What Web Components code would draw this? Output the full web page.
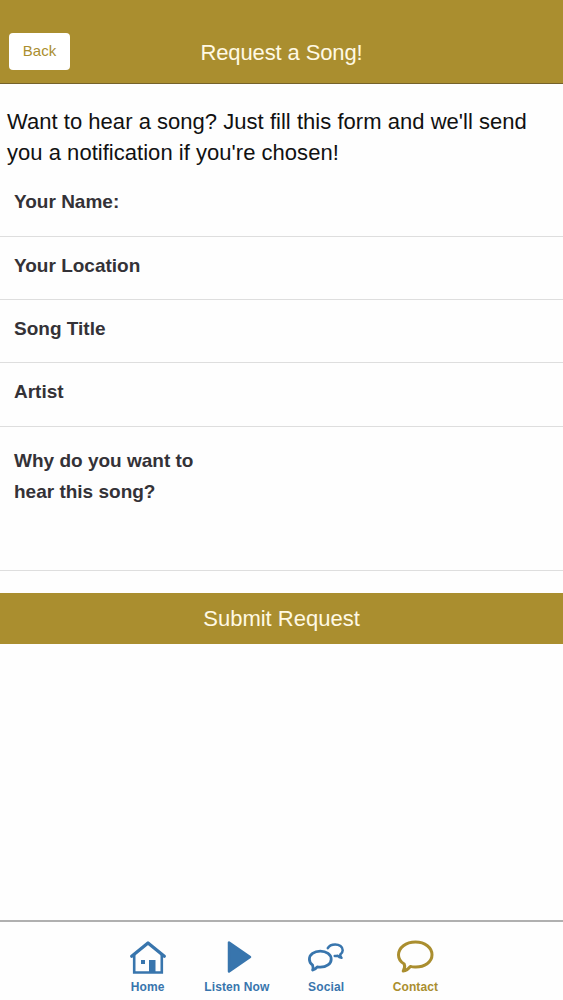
<!DOCTYPE html>
<html lang="en">
<head>
<meta charset="utf-8">
<title>Request a Song!</title>
<style>
html, body { margin: 0; height: 100%; background: #fefefe; }
body { font-family: "Liberation Sans", Arial, sans-serif; overflow: hidden; --gold: #aa8e2f; --blue: #3875ad; }
</style>
</head>
<body>
<song-request-page></song-request-page>
<script>
function define(name, html) {
  customElements.define(name, class extends HTMLElement {
    constructor() {
      super();
      this.attachShadow({ mode: "open" }).innerHTML = html;
    }
  });
}

define("nav-header", `
<style>
:host { display: grid; grid-template-columns: 100px 1fr 100px; box-sizing: border-box; height: 84px; padding-top: 20px; align-items: center; background: var(--gold); border-bottom: 1px solid #75622a; color: #fff9e4; }
button { justify-self: start; margin: 0 0 0 9px; padding: 0 0 2px; width: 61px; height: 37px; border: 0; border-radius: 4px; background: #fff; color: var(--gold); font: 15px "Liberation Sans", Arial, sans-serif; }
h1 { margin: 3px 0 0; font-size: 22px; font-weight: 400; line-height: 30px; text-align: center; white-space: nowrap; letter-spacing: -.12px; }
</style>
<button>Back</button><h1><slot></slot></h1>`);

define("intro-text", `
<style>
:host { display: block; box-sizing: border-box; height: 89.6px; padding: 22px 0 0 7px; font-size: 22px; line-height: 31px; letter-spacing: .03px; color: #111; white-space: nowrap; }
</style><slot></slot>`);

define("form-row", `
<style>
:host { display: flex; align-items: center; box-sizing: border-box; height: 63.3px; padding: 0 14px 5.6px; border-bottom: 1px solid #dedede; font-size: 19px; font-weight: 700; line-height: 31px; color: #343237; }
:host([tall]) { height: 144px; align-items: flex-start; padding-top: 18px; }
label { max-width: 200px; }
</style><label><slot></slot></label>`);

define("submit-button", `
<style>
:host { display: block; margin-top: 22px; }
button { display: block; width: 100%; height: 51px; border: 0; padding: 2px 0 0; background: var(--gold); color: #fff9e4; font: 22px "Liberation Sans", Arial, sans-serif; }
</style><button><slot></slot></button>`);

define("tab-item", `
<style>
:host { display: flex; flex-direction: column; align-items: center; width: 89.3px; color: var(--blue); font-size: 12px; font-weight: 700; line-height: 14px; letter-spacing: .12px; white-space: nowrap; }
:host([active]) { color: var(--gold); }
.icon { height: 40px; margin-bottom: 3px; }
</style><div class="icon"><slot name="icon"></slot></div><span><slot></slot></span>`);

define("tab-bar", `
<style>
:host { display: flex; justify-content: center; box-sizing: border-box; height: 80px; padding-top: 15px; border-top: 2px solid #b0b0b0; background: #fefefe; }
svg { display: block; fill: none; stroke: currentColor; stroke-linejoin: round; stroke-linecap: round; }
</style>
<tab-item><svg slot="icon" width="40" height="40" viewBox="0 0 40 40">
<path d="M6.2 18v17.5h27.6V18" stroke-width="2.6" stroke-linejoin="miter"/>
<path d="M3.7 19.3 20 6l16.3 13.3" stroke-width="3.3"/>
<path d="M21 23h6.5v13H21zM13 23h4v4h-4z" fill="currentColor" stroke="none"/></svg>Home</tab-item>
<tab-item><svg slot="icon" width="40" height="40" viewBox="0 0 40 40"><path d="M12 5.5v29L33 20z" fill="currentColor" stroke-width="2.5"/></svg>Listen Now</tab-item>
<tab-item><svg slot="icon" width="40" height="40" viewBox="0 0 40 40">
<path d="M6.6 28.2C4.5 26.6 3.4 24.4 3.4 22.2c0-4.6 4.8-8 10.9-8s10.9 3.4 10.9 8-4.8 8-10.9 8c-1.1 0-2.1-.1-3-.3-1.3 1.7-2.7 2.8-4.7 3.2.6-1.4.6-3.2 0-4.9Z" stroke-width="2.8"/>
<path d="M21.8 11.2c1.2-2.3 4.1-3.8 7.4-3.8 4.2 0 7.5 2.6 7.5 5.8 0 1.7-1 3.3-2.4 4.4-.2 1.1.2 2.2 1.2 3.2-1.7-.1-2.9-.9-3.7-2-.9.2-2 .2-3.1.1" stroke-width="2.5"/></svg>Social</tab-item>
<tab-item active><svg slot="icon" width="40" height="40" viewBox="0 0 40 40"><path d="M9.2 27C5.3 24.7 3.5 21.8 3.5 18 3.5 10.5 10.9 5 20.5 5S37 10.7 37 17.8c0 7.3-7.3 12.5-17 12.2-1.6 0-3.3-.2-4.6-.6-2.1 2.9-4.2 4.4-7.2 4.7 1.4-2.1 1.9-4.7 1-7.1Z" stroke-width="3"/></svg>Contact</tab-item>`);

define("song-request-page", `
<style>
:host { display: flex; flex-direction: column; height: 1000px; }
main { flex: 1; min-height: 0; }
form { margin: 0; }
</style>
<nav-header>Request a Song!</nav-header>
<main>
<intro-text>Want to hear a song? Just fill this form and we'll send<br>you a notification if you're chosen!</intro-text>
<form>
<form-row>Your Name:</form-row>
<form-row>Your Location</form-row>
<form-row>Song Title</form-row>
<form-row>Artist</form-row>
<form-row tall>Why do you want to hear this song?</form-row>
<submit-button>Submit Request</submit-button>
</form>
</main>
<tab-bar></tab-bar>`);
</script>
</body>
</html>
